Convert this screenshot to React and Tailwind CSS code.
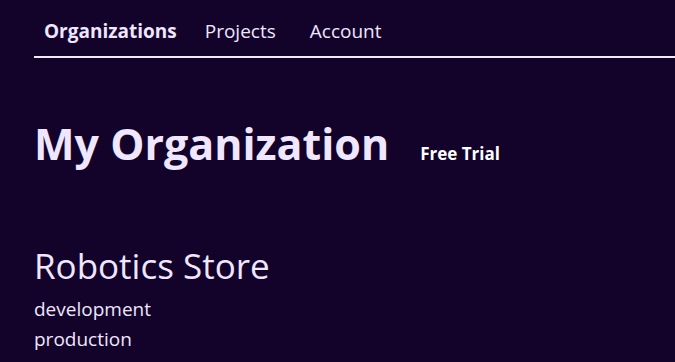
export default function App() {
  return (
    <div className="min-h-[362px] w-[675px] overflow-hidden bg-[#13022a] text-[#efe6ff]" style={{ fontFamily: '"Open Sans", "Noto Sans", sans-serif' }}>
      <div className="ml-[34px]">
        <nav className="flex items-center border-b-2 border-[#f3e9ff] pl-[10px] pt-[18px] pb-[12px] text-[19px] leading-[26px]">
          <span className="font-bold">Organizations</span>
          <span className="ml-[28px]">Projects</span>
          <span className="ml-[34px]">Account</span>
        </nav>
        <div className="mt-[58px] flex items-baseline gap-[31px]">
          <h1 className="text-[43px] font-bold leading-[56px]">My Organization</h1>
          <span className="text-[17px] font-bold text-white">Free Trial</span>
        </div>
        <h2 className="mt-[72px] text-[35px] font-normal leading-[44px]">Robotics Store</h2>
        <div className="mt-[6px] text-[19px] leading-[30px]">
          <div>development</div>
          <div>production</div>
        </div>
      </div>
    </div>
  );
}
